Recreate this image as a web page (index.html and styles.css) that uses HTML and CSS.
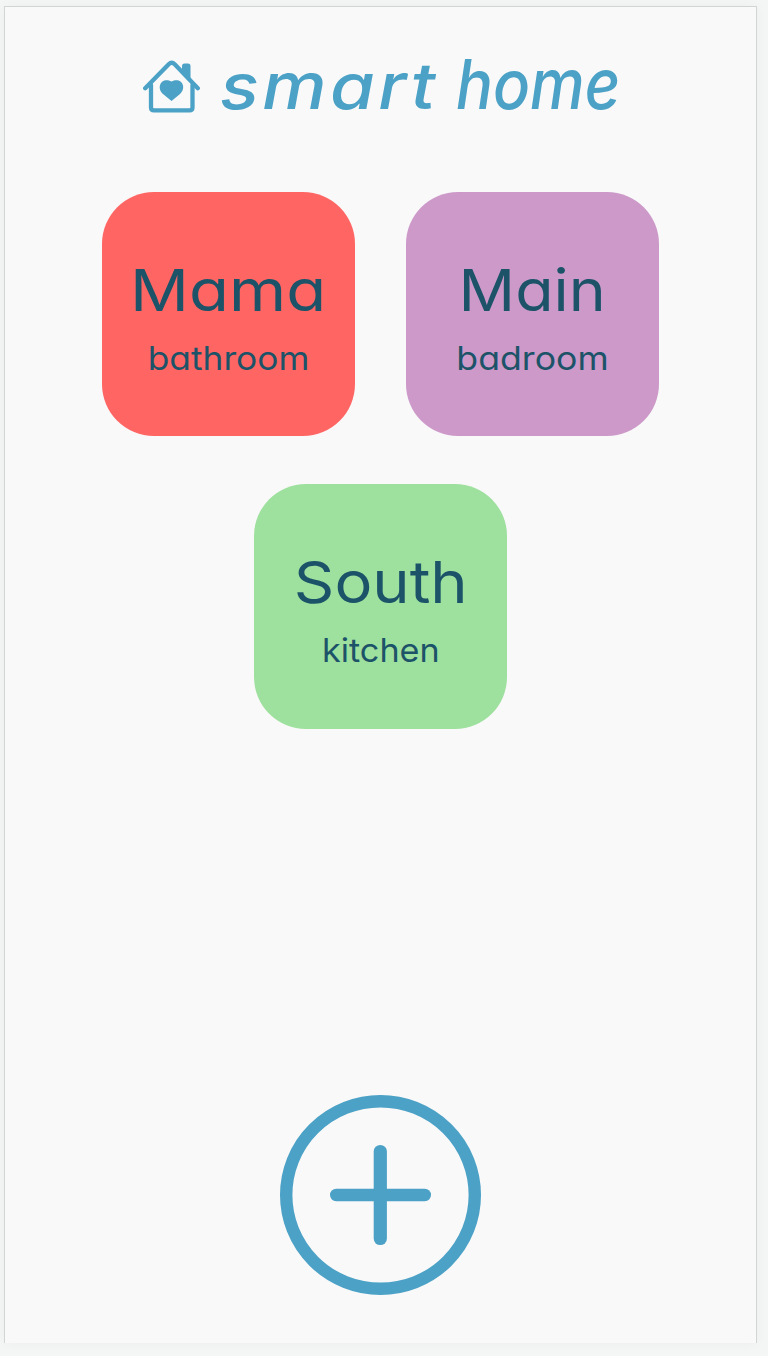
FILE: index.html
```html
<!DOCTYPE html>
<html lang="en">
<head>
<meta charset="utf-8">
<title>smart home</title>
<link rel="stylesheet" href="styles.css">
</head>
<body>
<main class="screen">
  <header class="brand">
    <svg class="brand-icon" viewBox="0 0 58 54" fill="none" stroke="currentColor" stroke-width="4.3" stroke-linecap="round" stroke-linejoin="round">
      <path d="M2.200 28.300 25.700 4.200Q28.700 1.200 31.700 4.200L54.800 28.300"/>
      <path d="M8 25V47.500Q8 50.300 11 50.300H46.500Q49.500 50.300 49.500 47.500V25"/>
      <path d="M39 14V6Q39 3.500 41.500 3.500H45Q47.500 3.500 47.500 6V22Z" fill="currentColor" stroke="none"/>
      <path d="M28.500 41 20 34C12.500 27 19 16.500 28.500 21.500C38 16.500 44.500 27 37 34Z" fill="currentColor" stroke="none"/>
    </svg>
    <h1 class="brand-name"><span class="word word-smart">smart</span><span class="word word-home">home</span></h1>
  </header>
  <section class="rooms">
    <article class="room room-red"><h2 class="room-name name-mama">Mama</h2><p class="room-type type-bathroom">bathroom</p></article>
    <article class="room room-purple"><h2 class="room-name name-main">Main</h2><p class="room-type type-badroom">badroom</p></article>
    <article class="room room-green"><h2 class="room-name name-south">South</h2><p class="room-type type-kitchen">kitchen</p></article>
  </section>
  <button class="add" aria-label="Add room">
    <svg class="add-icon" viewBox="0 0 201 200" fill="none" stroke="currentColor" stroke-linecap="round">
      <ellipse cx="100.500" cy="100" rx="94.300" ry="93.800" stroke-width="12.400"/>
      <path d="M56.200 100H144.800" stroke-width="12.400"/>
      <path d="M100.300 56.500V143.500" stroke-width="13.200"/>
    </svg>
  </button>
</main>
</body>
</html>
```
FILE: styles.css
```css
* { box-sizing: border-box; }
body {
  margin: 0;
  height: 1356px;
  padding: 6px 11px 13px 4px;
  background: #f4f6f6;
  overflow: hidden;
}
.screen {
  width: 753px;
  height: 1337px;
  display: flex;
  flex-direction: column;
  align-items: center;
  background: #f9f9f9;
  border: 1px solid #d2d5d5;
  border-bottom: 0;
  box-shadow: 0 0 12px rgba(0, 0, 0, 0.035);
}
.brand {
  width: 100%;
  height: 185px;
  padding: 53px 0 0 138px;
  display: flex;
  align-items: flex-start;
  color: #4ba1c6;
}
.brand-icon { width: 58px; height: 54px; flex: none; }
.brand-name {
  margin: -19px 0 0 19px;
  display: flex;
  font: italic 500 64px/90px Inter, "Open Sans", sans-serif;
  font-feature-settings: "cv11";
}
.word { display: block; white-space: nowrap; transform-origin: 0 68px; }
.word-smart { width: 236px; letter-spacing: 3px; transform: scaleX(1.13); }
.word-home { transform: scale(0.96, 1.08); }
.rooms {
  width: 557px;
  display: flex;
  flex-wrap: wrap;
  justify-content: center;
  gap: 48px 51px;
}
.room {
  width: 253px;
  height: 244px;
  padding-top: 56px;
  border-radius: 52px;
  display: flex;
  flex-direction: column;
  align-items: center;
  color: #1c5368;
  font-family: Inter, "Open Sans", sans-serif;
  font-feature-settings: "cv11";
}
.room-red { background: #ff6663; }
.room-purple { background: #cc99c9; }
.room-green { height: 245px; background: #9ee09e; }
.room-name { margin: 0; font-size: 58px; font-weight: 370; line-height: 84px; }
.room-type { margin: 1px 0 0; font-size: 33px; font-weight: 370; line-height: 50px; }
.name-mama { transform: scaleX(1.125); }
.name-main { transform: scaleX(1.08); }
.name-south { transform: scaleX(1.09); }
.type-bathroom { transform: scaleX(1.07); }
.type-badroom { transform: scaleX(1.08); }
.type-kitchen { transform: scaleX(1.035); }
.add {
  margin-top: auto;
  margin-bottom: 48px;
  padding: 0;
  border: 0;
  background: none;
  color: #4ba1c6;
}
.add-icon { display: block; width: 201px; height: 200px; }
```
